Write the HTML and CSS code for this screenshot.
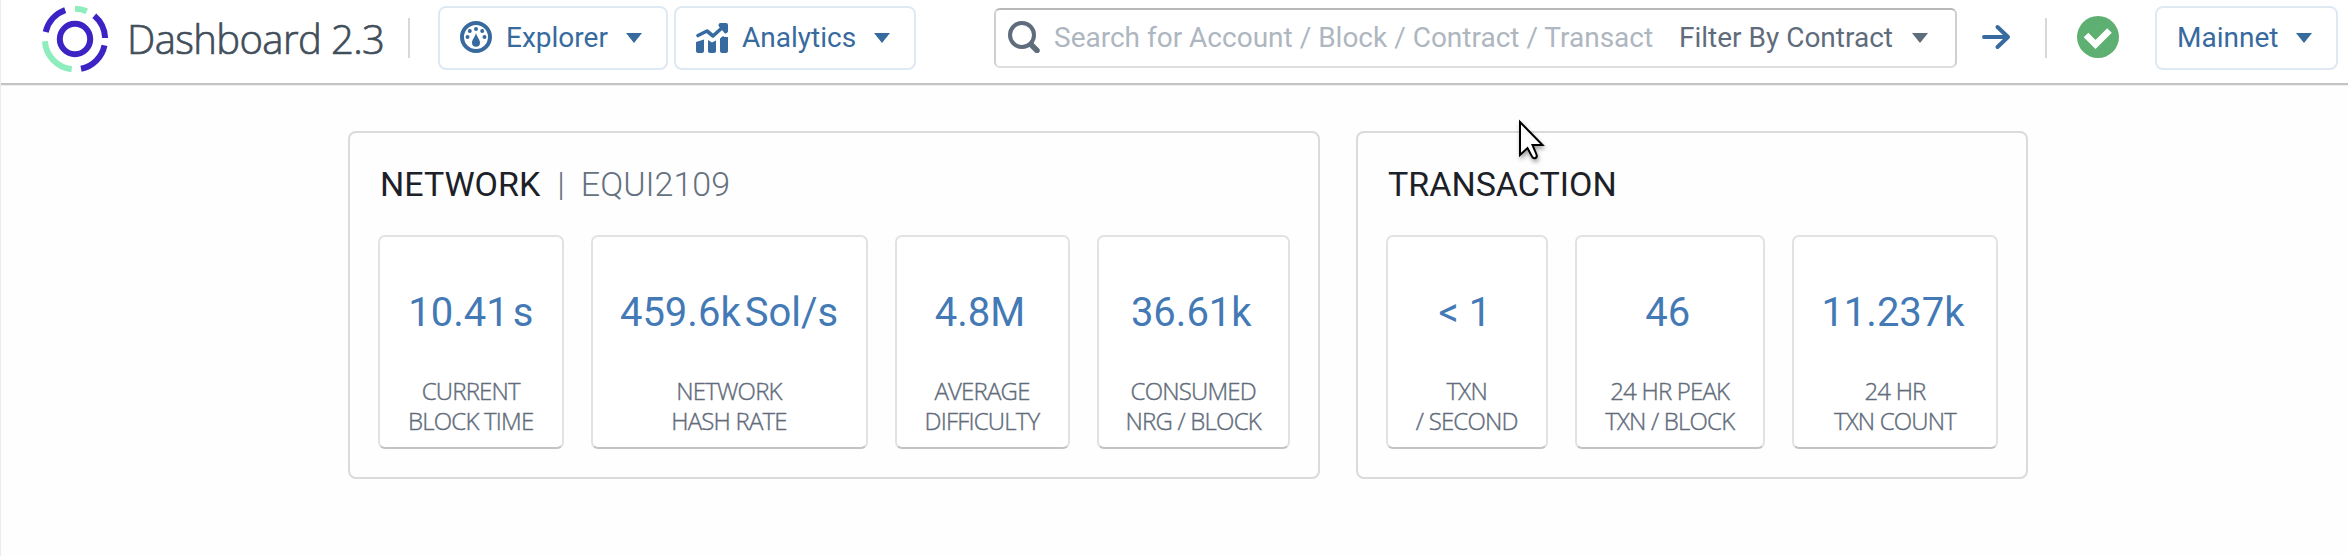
FILE: index.html
```html
<!DOCTYPE html>
<html lang="en">
<head>
<meta charset="utf-8">
<title>Dashboard 2.3</title>
<link rel="stylesheet" href="styles.css">
</head>
<body>
<header class="topbar">
  <svg class="logo" viewBox="0 0 68 68" fill="none" stroke-width="6">
    <circle cx="34" cy="34" r="15.200" stroke="#3b23c4"/>
    <g stroke="#3b23c4">
      <path d="M4.700 27A30.200 30.200 0 0 1 24.200 5.200"/>
      <path d="M53.300 10.700A30.200 30.200 0 0 1 64.100 33"/>
      <path d="M63.500 40.300A30.200 30.200 0 0 1 40 63.800"/>
    </g>
    <g stroke="#8eedbd">
      <path d="M34 3.800A30.200 30.200 0 0 1 45.800 6.200"/>
      <path d="M3.900 36.300A30.200 30.200 0 0 0 30.700 64.200"/>
    </g>
  </svg>
  <h1 class="brand"><span>Dashboard 2.3</span></h1>
  <i class="divider divider-left"></i>
  <button class="menu menu-explorer">
    <svg class="icon" viewBox="0 0 32 32">
      <circle cx="16" cy="16" r="14" fill="none" stroke="currentColor" stroke-width="4"/>
      <g fill="currentColor"><circle cx="16" cy="8" r="2"/><circle cx="9.800" cy="10" r="2"/><circle cx="22.200" cy="10" r="2"/><circle cx="7.500" cy="16" r="2"/><circle cx="24.500" cy="16" r="2"/>
      <path d="M16 12c1 4 4 6.500 4 9.800a4 4 0 0 1-8 0C12 18.500 15 16 16 12z"/></g>
    </svg>
    <span class="menu-text">Explorer</span><i class="caret"></i>
  </button>
  <button class="menu menu-analytics">
    <svg class="icon" viewBox="0 0 32 32" fill="currentColor">
      <path d="M0 21L8 18.500V30q0 2-2 2H2q-2 0-2-2zM12 19l4 2.500 4-2V30q0 2-2 2h-4q-2 0-2-2zM24 17.500l3-2.500 1.500 1H32v14q0 2-2 2h-4q-2 0-2-2z"/>
      <path d="M2 14.500L11 10l6 5L28 5" fill="none" stroke="currentColor" stroke-width="3.600" stroke-linecap="round" stroke-linejoin="round"/>
      <path d="M24 2h6q2 0 2 2v6.500q-1.500 3-3.500 1.500L23 5.500q-1.500-2 1-3.500z"/>
    </svg>
    <span class="menu-text">Analytics</span><i class="caret"></i>
  </button>
  <div class="search">
    <svg class="search-icon" viewBox="0 0 32 32" fill="none" stroke="currentColor"><circle cx="14" cy="14" r="12" stroke-width="4"/><path d="M23.500 24l5.500 5.500" stroke-width="5.500" stroke-linecap="round"/></svg>
    <span class="placeholder">Search for Account / Block / Contract / Transact</span>
    <span class="filter">Filter By Contract</span><i class="caret"></i>
  </div>
  <svg class="go" viewBox="0 0 30 26" fill="none" stroke="currentColor" stroke-width="4" stroke-linecap="round" stroke-linejoin="round"><path d="M3 13h24M16.500 3L27 13 16.500 23"/></svg>
  <i class="divider divider-right"></i>
  <svg class="status" viewBox="0 0 42 42"><circle cx="21" cy="21" r="21" fill="#5eaf72"/><path d="M9 19L18.500 28.500 32.500 14.500" fill="none" stroke="#fff" stroke-width="6.500" stroke-linejoin="miter"/></svg>
  <button class="menu menu-network"><span class="menu-text">Mainnet</span><i class="caret"></i></button>
</header>
<main class="panels">
  <section class="panel panel-network">
    <h2 class="panel-title">NETWORK<span class="bar">|</span><span class="sub">EQUI2109</span></h2>
    <div class="cards cards-network">
      <div class="card"><p class="value">10.41<span class="unit">s</span></p><p class="label"><span>CURRENT</span><br><span>BLOCK TIME</span></p></div>
      <div class="card"><p class="value">459.6k<span class="unit">Sol/s</span></p><p class="label"><span>NETWORK</span><br><span>HASH RATE</span></p></div>
      <div class="card"><p class="value">4.8M<span class="unit"></span></p><p class="label"><span>AVERAGE</span><br><span>DIFFICULTY</span></p></div>
      <div class="card"><p class="value">36.61k<span class="unit"></span></p><p class="label"><span>CONSUMED</span><br><span>NRG / BLOCK</span></p></div>
    </div>
  </section>
  <section class="panel panel-transaction">
    <h2 class="panel-title">TRANSACTION</h2>
    <div class="cards cards-transaction">
      <div class="card"><p class="value">&lt; 1<span class="unit"></span></p><p class="label"><span>TXN</span><br><span>/ SECOND</span></p></div>
      <div class="card"><p class="value">46<span class="unit"></span></p><p class="label"><span>24 HR PEAK</span><br><span>TXN / BLOCK</span></p></div>
      <div class="card"><p class="value">11.237k<span class="unit"></span></p><p class="label"><span>24 HR</span><br><span>TXN COUNT</span></p></div>
    </div>
  </section>
</main>
<svg class="cursor" viewBox="0 0 30 44"><path d="M2 3V36L9.500 29l4.500 8.500q1.500 2.500 3.500 1.500 2-1 1-3.500L14.500 26H24.500z" fill="#fff" stroke="#000" stroke-width="2"/></svg>
</body>
</html>
```

FILE: styles.css
```css
* { box-sizing: border-box; }
body { margin: 0; height: 556px; overflow: hidden; background: #fefefe; font-family: Roboto, "Liberation Sans", sans-serif; border-left: 1px solid #ececec; }
h1, h2, p { margin: 0; font-weight: 400; }
.topbar { display: flex; align-items: flex-start; height: 85px; margin-bottom: 46px; background: #fff; border-bottom: 2px solid #c4c4c4; box-shadow: 0 1px 0 #eee; }
.topbar > * { flex: none; }
.logo { width: 68px; height: 68px; margin: 5px 0 0 40px; }
.brand { width: 258px; margin: 11px 0 0 18px; font: 300 40px/56px "Open Sans", "Noto Sans", sans-serif; letter-spacing: -.6px; color: #414e5a; -webkit-text-stroke: .7px #414e5a; white-space: nowrap; }
.divider { width: 2px; height: 40px; margin-top: 18px; background: #d8d8d8; }
.divider-left { margin-left: 23px; }
.menu { display: flex; align-items: center; height: 64px; margin-top: 6px; padding: 0 24px 0 20px; border: 2px solid #dfe9f3; border-radius: 8px; background: #fff; color: #376a9e; font: 400 28px/32px Roboto, sans-serif; }
.menu .icon { width: 32px; height: 32px; margin-top: -2px; }
.menu-text { margin-left: 14px; white-space: nowrap; }
.caret { width: 0; height: 0; margin-left: auto; border: 8px solid transparent; border-top: 10px solid currentColor; border-bottom: 0; }
.menu-explorer { width: 230px; margin-left: 28px; }
.menu-analytics { width: 242px; margin-left: 6px; }
.search { display: flex; align-items: center; width: 963px; height: 60px; margin: 8px 0 0 78px; padding: 0 27px 0 12px; border: 2px solid #cfcfcf; border-top-color: #b8b8b8; border-bottom-color: #dedede; border-radius: 6px; font-size: 28px; line-height: 32px; color: #5f6c7b; white-space: nowrap; }
.search-icon { width: 32px; height: 32px; margin-right: 14px; margin-top: -2px; }
.placeholder { width: 604px; color: #aeb6bf; }
.filter { margin-left: 21px; }
.go { width: 30px; height: 26px; margin: 24px 0 0 24px; color: #376a9e; }
.divider-right { margin-left: 34px; }
.status { width: 42px; height: 42px; margin: 16px 0 0 30px; }
.menu-network { width: 183px; margin-left: 36px; }
.menu-network .menu-text { margin-left: 0; }
.panels { display: flex; gap: 36px; padding-left: 347px; }
.panel { height: 348px; padding: 28px 28px 0; border: 2px solid #dbdbdb; border-radius: 8px; }
.panel-network { width: 972px; }
.panel-transaction { width: 672px; }
.panel-title { height: 74px; padding-left: 2px; font-size: 34px; line-height: 46px; color: #1c2127; white-space: nowrap; }
.bar { margin: 0 16px 0 17px; font-weight: 300; color: #65717e; }
.sub { font-weight: 300; color: #65717e; }
.cards { display: grid; column-gap: 27px; grid-template-rows: 214px; }
.cards-network { grid-template-columns: 185.5px 277px 175px 193.5px; }
.cards-transaction { grid-template-columns: 161.500px 190.500px 206px; }
.card { padding-top: 52px; border: 2px solid #e2e2e2; border-bottom-color: #c3c3c3; border-radius: 7px; text-align: center; background: #fff; }
.value { font-size: 40px; line-height: 48px; color: #437ab6; white-space: nowrap; }
.unit { display: inline-block; margin-left: 4px; }
.label { margin-top: 39px; font: 300 24px/30px "Open Sans", "Noto Sans", sans-serif; letter-spacing: -.8px; color: #5f6c7b; -webkit-text-stroke: .4px #5f6c7b; white-space: nowrap; }
.cursor { position: absolute; left: 1518px; top: 119px; width: 30px; height: 44px; filter: drop-shadow(1px 3px 2px rgba(0,0,0,.35)); }
```
